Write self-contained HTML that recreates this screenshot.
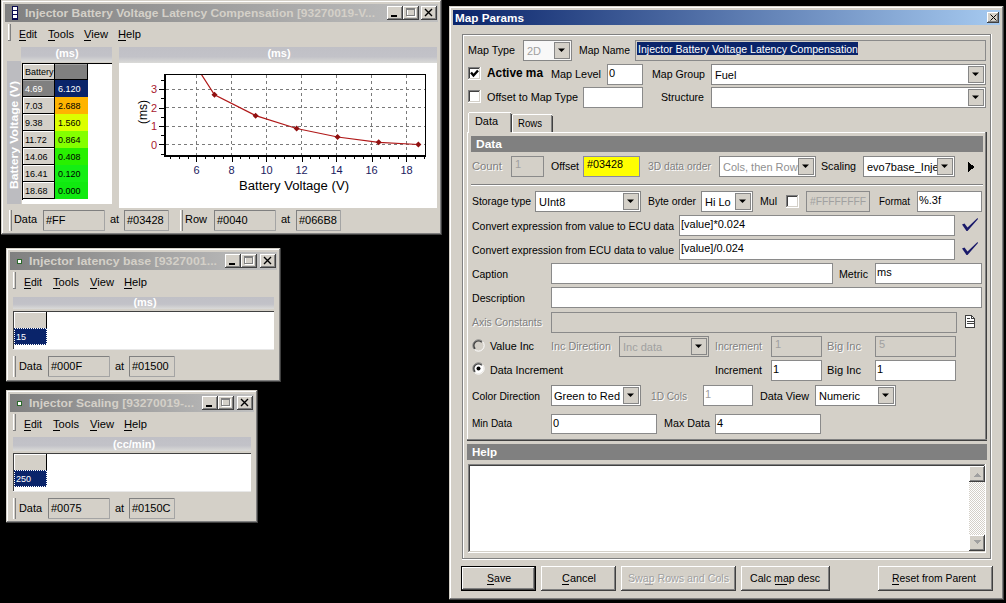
<!DOCTYPE html><html><head><meta charset="utf-8"><style>html,body{margin:0;padding:0;background:#000;overflow:hidden}svg{display:block}text{font-family:"Liberation Sans",sans-serif}</style></head><body>
<svg width="1006" height="603" viewBox="0 0 1006 603" shape-rendering="crispEdges">
<rect x="0" y="0" width="1006" height="603" fill="#000" />
<rect x="1" y="0" width="441" height="235" fill="#d4d0c8" />
<rect x="1" y="0" width="441" height="1" fill="#d4d0c8" />
<rect x="1" y="0" width="1" height="235" fill="#d4d0c8" />
<rect x="2" y="1" width="439" height="1" fill="#ffffff" />
<rect x="2" y="1" width="1" height="233" fill="#ffffff" />
<rect x="1" y="234" width="441" height="1" fill="#404040" />
<rect x="441" y="0" width="1" height="235" fill="#404040" />
<rect x="2" y="233" width="439" height="1" fill="#808080" />
<rect x="440" y="1" width="1" height="233" fill="#808080" />
<defs><linearGradient id="g1_0" x1="0" x2="1" y1="0" y2="0"><stop offset="0" stop-color="#808080"/><stop offset="1" stop-color="#c0c0c0"/></linearGradient></defs>
<rect x="5" y="4" width="433" height="18" fill="url(#g1_0)" />
<rect x="12" y="6" width="6" height="14" fill="#0a0a50" />
<rect x="13" y="7" width="4" height="3" fill="#ffffff" />
<rect x="13" y="11" width="4" height="3" fill="#ffffff" />
<rect x="13" y="15" width="4" height="3" fill="#ffffff" />
<text x="25" y="17" font-size="11" fill="#d4d0c8" font-weight="bold" textLength="350" lengthAdjust="spacingAndGlyphs" >Injector Battery Voltage Latency Compensation [93270019-V...</text>
<rect x="387" y="6" width="16" height="14" fill="#d4d0c8" />
<rect x="387" y="19" width="16" height="1" fill="#404040" />
<rect x="402" y="6" width="1" height="14" fill="#404040" />
<rect x="387" y="6" width="15" height="1" fill="#ffffff" />
<rect x="387" y="6" width="1" height="13" fill="#ffffff" />
<rect x="388" y="18" width="14" height="1" fill="#808080" />
<rect x="401" y="7" width="1" height="12" fill="#808080" />
<rect x="391" y="15" width="6" height="2" fill="#000" />
<rect x="403" y="6" width="16" height="14" fill="#d4d0c8" />
<rect x="403" y="19" width="16" height="1" fill="#404040" />
<rect x="418" y="6" width="1" height="14" fill="#404040" />
<rect x="403" y="6" width="15" height="1" fill="#ffffff" />
<rect x="403" y="6" width="1" height="13" fill="#ffffff" />
<rect x="404" y="18" width="14" height="1" fill="#808080" />
<rect x="417" y="7" width="1" height="12" fill="#808080" />
<rect x="407.5" y="9.5" width="8" height="7" fill="none" stroke="#ffffff" stroke-width="1"/>
<rect x="406.5" y="8.5" width="8" height="7" fill="none" stroke="#808080" stroke-width="1"/>
<rect x="406" y="8" width="9" height="2" fill="#808080" />
<rect x="421" y="6" width="16" height="14" fill="#d4d0c8" />
<rect x="421" y="19" width="16" height="1" fill="#404040" />
<rect x="436" y="6" width="1" height="14" fill="#404040" />
<rect x="421" y="6" width="15" height="1" fill="#ffffff" />
<rect x="421" y="6" width="1" height="13" fill="#ffffff" />
<rect x="422" y="18" width="14" height="1" fill="#808080" />
<rect x="435" y="7" width="1" height="12" fill="#808080" />
<path d="M425 9 L432 16 M432 9 L425 16" stroke="#000" stroke-width="1.4" fill="none" shape-rendering="geometricPrecision"/>
<rect x="8" y="24" width="1" height="17" fill="#ffffff" />
<rect x="9" y="24" width="1" height="17" fill="#d4d0c8" />
<rect x="10" y="24" width="1" height="17" fill="#808080" />
<rect x="8" y="40" width="3" height="1" fill="#808080" />
<text x="19" y="38" font-size="11" fill="#000" textLength="18" lengthAdjust="spacingAndGlyphs" >Edit</text>
<rect x="19" y="40" width="7" height="1" fill="#000" />
<text x="48" y="38" font-size="11" fill="#000" textLength="26" lengthAdjust="spacingAndGlyphs" >Tools</text>
<rect x="48" y="40" width="7" height="1" fill="#000" />
<text x="84" y="38" font-size="11" fill="#000" textLength="24" lengthAdjust="spacingAndGlyphs" >View</text>
<rect x="84" y="40" width="7" height="1" fill="#000" />
<text x="118" y="38" font-size="11" fill="#000" textLength="23" lengthAdjust="spacingAndGlyphs" >Help</text>
<rect x="118" y="40" width="8" height="1" fill="#000" />
<defs><linearGradient id="bandg" x1="0" x2="0" y1="0" y2="1"><stop offset="0" stop-color="#c0c0c6"/><stop offset="0.6" stop-color="#c2c2c8"/><stop offset="1" stop-color="#dadad8"/></linearGradient></defs>
<rect x="6" y="46" width="107" height="160" fill="#d4d0c8" />
<rect x="21" y="47" width="91" height="15" fill="url(#bandg)" />
<text x="67" y="57" font-size="11" fill="#ffffff" font-weight="bold" text-anchor="middle" >(ms)</text>
<rect x="7" y="61" width="14" height="143" fill="#bcbcc0" />
<text transform="translate(18,189) rotate(-90)" font-size="10.5" font-weight="bold" fill="#ffffff" textLength="108" lengthAdjust="spacingAndGlyphs">Battery Voltage (V)</text>
<rect x="22" y="63" width="90" height="141" fill="#ffffff" />
<rect x="22" y="63" width="90" height="1" fill="#000" />
<rect x="22" y="63" width="1" height="137" fill="#000" />
<rect x="23" y="64" width="32" height="16" fill="#d4d0c8" />
<rect x="23" y="64" width="32" height="1" fill="#ffffff" />
<rect x="23" y="64" width="1" height="16" fill="#ffffff" />
<rect x="23" y="79" width="32" height="1" fill="#000000" />
<rect x="54" y="64" width="1" height="16" fill="#000000" />
<text x="25" y="75" font-size="9" fill="#000" >Battery</text>
<rect x="55" y="64" width="33" height="16" fill="#808080" />
<rect x="55" y="64" width="33" height="1" fill="#a0a0a0" />
<rect x="87" y="64" width="1" height="16" fill="#000" />
<rect x="55" y="79" width="33" height="1" fill="#000" />
<rect x="23" y="80" width="32" height="17" fill="#808080" />
<rect x="23" y="80" width="32" height="1" fill="#a0a0a0" />
<rect x="54" y="80" width="1" height="17" fill="#000" />
<rect x="23" y="96" width="32" height="1" fill="#000" />
<text x="25" y="92" font-size="9" fill="#ffffff" >4.69</text>
<rect x="55" y="80" width="33" height="17" fill="#0a246a" />
<text x="58" y="92" font-size="9" fill="#fff" >6.120</text>
<rect x="23" y="97" width="32" height="17" fill="#d4d0c8" />
<rect x="23" y="97" width="32" height="1" fill="#ffffff" />
<rect x="23" y="97" width="1" height="17" fill="#ffffff" />
<rect x="23" y="113" width="32" height="1" fill="#000000" />
<rect x="54" y="97" width="1" height="17" fill="#000000" />
<text x="25" y="109" font-size="9" fill="#000" >7.03</text>
<rect x="55" y="97" width="33" height="17" fill="#ffb400" />
<text x="58" y="109" font-size="9" fill="#000" >2.688</text>
<rect x="23" y="114" width="32" height="17" fill="#d4d0c8" />
<rect x="23" y="114" width="32" height="1" fill="#ffffff" />
<rect x="23" y="114" width="1" height="17" fill="#ffffff" />
<rect x="23" y="130" width="32" height="1" fill="#000000" />
<rect x="54" y="114" width="1" height="17" fill="#000000" />
<text x="25" y="126" font-size="9" fill="#000" >9.38</text>
<rect x="55" y="114" width="33" height="17" fill="#dcff00" />
<text x="58" y="126" font-size="9" fill="#000" >1.560</text>
<rect x="23" y="131" width="32" height="17" fill="#d4d0c8" />
<rect x="23" y="131" width="32" height="1" fill="#ffffff" />
<rect x="23" y="131" width="1" height="17" fill="#ffffff" />
<rect x="23" y="147" width="32" height="1" fill="#000000" />
<rect x="54" y="131" width="1" height="17" fill="#000000" />
<text x="25" y="143" font-size="9" fill="#000" >11.72</text>
<rect x="55" y="131" width="33" height="17" fill="#84ff00" />
<text x="58" y="143" font-size="9" fill="#000" >0.864</text>
<rect x="23" y="148" width="32" height="17" fill="#d4d0c8" />
<rect x="23" y="148" width="32" height="1" fill="#ffffff" />
<rect x="23" y="148" width="1" height="17" fill="#ffffff" />
<rect x="23" y="164" width="32" height="1" fill="#000000" />
<rect x="54" y="148" width="1" height="17" fill="#000000" />
<text x="25" y="160" font-size="9" fill="#000" >14.06</text>
<rect x="55" y="148" width="33" height="17" fill="#28f000" />
<text x="58" y="160" font-size="9" fill="#000" >0.408</text>
<rect x="23" y="165" width="32" height="17" fill="#d4d0c8" />
<rect x="23" y="165" width="32" height="1" fill="#ffffff" />
<rect x="23" y="165" width="1" height="17" fill="#ffffff" />
<rect x="23" y="181" width="32" height="1" fill="#000000" />
<rect x="54" y="165" width="1" height="17" fill="#000000" />
<text x="25" y="177" font-size="9" fill="#000" >16.41</text>
<rect x="55" y="165" width="33" height="17" fill="#14ee14" />
<text x="58" y="177" font-size="9" fill="#000" >0.120</text>
<rect x="23" y="182" width="32" height="17" fill="#d4d0c8" />
<rect x="23" y="182" width="32" height="1" fill="#ffffff" />
<rect x="23" y="182" width="1" height="17" fill="#ffffff" />
<rect x="23" y="198" width="32" height="1" fill="#000000" />
<rect x="54" y="182" width="1" height="17" fill="#000000" />
<text x="25" y="194" font-size="9" fill="#000" >18.68</text>
<rect x="55" y="182" width="33" height="17" fill="#10ea10" />
<text x="58" y="194" font-size="9" fill="#000" >0.000</text>
<rect x="119" y="47" width="318" height="16" fill="url(#bandg)" />
<text x="279" y="57" font-size="11" fill="#ffffff" font-weight="bold" text-anchor="middle" >(ms)</text>
<rect x="119" y="63" width="318" height="145" fill="#ffffff" />
<line x1="196.5" y1="75" x2="196.5" y2="155" stroke="#7a7a7a" stroke-width="1" stroke-dasharray="3,3" shape-rendering="crispEdges"/>
<line x1="231.5" y1="75" x2="231.5" y2="155" stroke="#7a7a7a" stroke-width="1" stroke-dasharray="3,3" shape-rendering="crispEdges"/>
<line x1="266.5" y1="75" x2="266.5" y2="155" stroke="#7a7a7a" stroke-width="1" stroke-dasharray="3,3" shape-rendering="crispEdges"/>
<line x1="301.5" y1="75" x2="301.5" y2="155" stroke="#7a7a7a" stroke-width="1" stroke-dasharray="3,3" shape-rendering="crispEdges"/>
<line x1="336.5" y1="75" x2="336.5" y2="155" stroke="#7a7a7a" stroke-width="1" stroke-dasharray="3,3" shape-rendering="crispEdges"/>
<line x1="371.5" y1="75" x2="371.5" y2="155" stroke="#7a7a7a" stroke-width="1" stroke-dasharray="3,3" shape-rendering="crispEdges"/>
<line x1="406.5" y1="75" x2="406.5" y2="155" stroke="#7a7a7a" stroke-width="1" stroke-dasharray="3,3" shape-rendering="crispEdges"/>
<line x1="166" y1="144.5" x2="426" y2="144.5" stroke="#7a7a7a" stroke-width="1" stroke-dasharray="3,3" shape-rendering="crispEdges"/>
<line x1="166" y1="126.0" x2="426" y2="126.0" stroke="#7a7a7a" stroke-width="1" stroke-dasharray="3,3" shape-rendering="crispEdges"/>
<line x1="166" y1="107.5" x2="426" y2="107.5" stroke="#7a7a7a" stroke-width="1" stroke-dasharray="3,3" shape-rendering="crispEdges"/>
<line x1="166" y1="89.0" x2="426" y2="89.0" stroke="#7a7a7a" stroke-width="1" stroke-dasharray="3,3" shape-rendering="crispEdges"/>
<rect x="164" y="74" width="262" height="1" fill="#000" />
<rect x="425" y="74" width="1" height="82" fill="#000" />
<rect x="164" y="74" width="2" height="83" fill="#000" />
<rect x="164" y="155" width="262" height="2" fill="#000" />
<rect x="170" y="157" width="1" height="2" fill="#000" />
<rect x="179" y="157" width="1" height="2" fill="#000" />
<rect x="188" y="157" width="1" height="2" fill="#000" />
<rect x="196" y="157" width="1" height="5" fill="#000" />
<rect x="205" y="157" width="1" height="2" fill="#000" />
<rect x="214" y="157" width="1" height="2" fill="#000" />
<rect x="223" y="157" width="1" height="2" fill="#000" />
<rect x="232" y="157" width="1" height="5" fill="#000" />
<rect x="240" y="157" width="1" height="2" fill="#000" />
<rect x="249" y="157" width="1" height="2" fill="#000" />
<rect x="258" y="157" width="1" height="2" fill="#000" />
<rect x="266" y="157" width="1" height="5" fill="#000" />
<rect x="275" y="157" width="1" height="2" fill="#000" />
<rect x="284" y="157" width="1" height="2" fill="#000" />
<rect x="293" y="157" width="1" height="2" fill="#000" />
<rect x="302" y="157" width="1" height="5" fill="#000" />
<rect x="310" y="157" width="1" height="2" fill="#000" />
<rect x="319" y="157" width="1" height="2" fill="#000" />
<rect x="328" y="157" width="1" height="2" fill="#000" />
<rect x="336" y="157" width="1" height="5" fill="#000" />
<rect x="345" y="157" width="1" height="2" fill="#000" />
<rect x="354" y="157" width="1" height="2" fill="#000" />
<rect x="363" y="157" width="1" height="2" fill="#000" />
<rect x="372" y="157" width="1" height="5" fill="#000" />
<rect x="380" y="157" width="1" height="2" fill="#000" />
<rect x="389" y="157" width="1" height="2" fill="#000" />
<rect x="398" y="157" width="1" height="2" fill="#000" />
<rect x="406" y="157" width="1" height="5" fill="#000" />
<rect x="415" y="157" width="1" height="2" fill="#000" />
<rect x="424" y="157" width="1" height="2" fill="#000" />
<rect x="161" y="154" width="3" height="1" fill="#000" />
<rect x="159" y="144" width="5" height="1" fill="#000" />
<rect x="161" y="135" width="3" height="1" fill="#000" />
<rect x="159" y="126" width="5" height="1" fill="#000" />
<rect x="161" y="117" width="3" height="1" fill="#000" />
<rect x="159" y="108" width="5" height="1" fill="#000" />
<rect x="161" y="98" width="3" height="1" fill="#000" />
<rect x="159" y="89" width="5" height="1" fill="#000" />
<rect x="161" y="80" width="3" height="1" fill="#000" />
<text x="157" y="148.5" font-size="11" fill="#a82030" text-anchor="end" >0</text>
<text x="157" y="130.0" font-size="11" fill="#a82030" text-anchor="end" >1</text>
<text x="157" y="111.5" font-size="11" fill="#a82030" text-anchor="end" >2</text>
<text x="157" y="93.0" font-size="11" fill="#a82030" text-anchor="end" >3</text>
<text x="196.5" y="174" font-size="11" fill="#1a1a60" text-anchor="middle" >6</text>
<text x="231.5" y="174" font-size="11" fill="#1a1a60" text-anchor="middle" >8</text>
<text x="266.5" y="174" font-size="11" fill="#1a1a60" text-anchor="middle" >10</text>
<text x="301.5" y="174" font-size="11" fill="#1a1a60" text-anchor="middle" >12</text>
<text x="336.5" y="174" font-size="11" fill="#1a1a60" text-anchor="middle" >14</text>
<text x="371.5" y="174" font-size="11" fill="#1a1a60" text-anchor="middle" >16</text>
<text x="406.5" y="174" font-size="11" fill="#1a1a60" text-anchor="middle" >18</text>
<text x="294" y="190" font-size="12" fill="#000" textLength="110" lengthAdjust="spacingAndGlyphs" text-anchor="middle" >Battery Voltage (V)</text>
<text transform="translate(147,112) rotate(-90)" font-size="12" fill="#000" text-anchor="middle">(ms)</text>
<defs><clipPath id="plotclip"><rect x="166" y="75" width="259" height="80"/></clipPath></defs>
<path d="M173.6 31.3 L214.5 94.8 L255.7 115.6 L296.6 128.5 L337.6 137.0 L378.7 142.3 L418.4 144.5" stroke="#b01818" stroke-width="1.2" fill="none" clip-path="url(#plotclip)" shape-rendering="geometricPrecision"/>
<path d="M211.525 94.77199999999999 L214.525 91.77199999999999 L217.525 94.77199999999999 L214.525 97.77199999999999 Z" fill="#901010" shape-rendering="geometricPrecision"/>
<path d="M252.65 115.64 L255.65 112.64 L258.65 115.64 L255.65 118.64 Z" fill="#901010" shape-rendering="geometricPrecision"/>
<path d="M293.6 128.516 L296.6 125.51599999999999 L299.6 128.516 L296.6 131.516 Z" fill="#901010" shape-rendering="geometricPrecision"/>
<path d="M334.55 136.952 L337.55 133.952 L340.55 136.952 L337.55 139.952 Z" fill="#901010" shape-rendering="geometricPrecision"/>
<path d="M375.675 142.28 L378.675 139.28 L381.675 142.28 L378.675 145.28 Z" fill="#901010" shape-rendering="geometricPrecision"/>
<path d="M415.4 144.5 L418.4 141.5 L421.4 144.5 L418.4 147.5 Z" fill="#901010" shape-rendering="geometricPrecision"/>
<rect x="9" y="210" width="1" height="21" fill="#ffffff" />
<rect x="10" y="210" width="1" height="21" fill="#d4d0c8" />
<rect x="11" y="210" width="1" height="21" fill="#808080" />
<text x="14" y="223" font-size="11" fill="#000" textLength="23" lengthAdjust="spacingAndGlyphs" >Data</text>
<rect x="43" y="210" width="62" height="21" fill="#d4d0c8" />
<rect x="43" y="210" width="62" height="1" fill="#808080" />
<rect x="43" y="210" width="1" height="21" fill="#808080" />
<rect x="43" y="230" width="62" height="1" fill="#a4a4a4" />
<rect x="104" y="210" width="1" height="21" fill="#a4a4a4" />
<text x="46" y="224" font-size="11" fill="#000" >#FF</text>
<text x="110" y="223" font-size="11" fill="#000" >at</text>
<rect x="124" y="210" width="45" height="21" fill="#d4d0c8" />
<rect x="124" y="210" width="45" height="1" fill="#808080" />
<rect x="124" y="210" width="1" height="21" fill="#808080" />
<rect x="124" y="230" width="45" height="1" fill="#a4a4a4" />
<rect x="168" y="210" width="1" height="21" fill="#a4a4a4" />
<text x="127" y="224" font-size="11" fill="#000" >#03428</text>
<rect x="180" y="210" width="1" height="21" fill="#ffffff" />
<rect x="181" y="210" width="1" height="21" fill="#d4d0c8" />
<rect x="182" y="210" width="1" height="21" fill="#808080" />
<text x="185" y="223" font-size="11" fill="#000" textLength="22" lengthAdjust="spacingAndGlyphs" >Row</text>
<rect x="214" y="210" width="62" height="21" fill="#d4d0c8" />
<rect x="214" y="210" width="62" height="1" fill="#808080" />
<rect x="214" y="210" width="1" height="21" fill="#808080" />
<rect x="214" y="230" width="62" height="1" fill="#a4a4a4" />
<rect x="275" y="210" width="1" height="21" fill="#a4a4a4" />
<text x="217" y="224" font-size="11" fill="#000" >#0040</text>
<text x="281" y="223" font-size="11" fill="#000" >at</text>
<rect x="296" y="210" width="45" height="21" fill="#d4d0c8" />
<rect x="296" y="210" width="45" height="1" fill="#808080" />
<rect x="296" y="210" width="1" height="21" fill="#808080" />
<rect x="296" y="230" width="45" height="1" fill="#a4a4a4" />
<rect x="340" y="210" width="1" height="21" fill="#a4a4a4" />
<text x="299" y="224" font-size="11" fill="#000" >#066B8</text>
<rect x="6" y="248" width="275" height="134" fill="#d4d0c8" />
<rect x="6" y="248" width="275" height="1" fill="#d4d0c8" />
<rect x="6" y="248" width="1" height="134" fill="#d4d0c8" />
<rect x="7" y="249" width="273" height="1" fill="#ffffff" />
<rect x="7" y="249" width="1" height="132" fill="#ffffff" />
<rect x="6" y="381" width="275" height="1" fill="#404040" />
<rect x="280" y="248" width="1" height="134" fill="#404040" />
<rect x="7" y="380" width="273" height="1" fill="#808080" />
<rect x="279" y="249" width="1" height="132" fill="#808080" />
<defs><linearGradient id="gs6_248" x1="0" x2="1" y1="0" y2="0"><stop offset="0" stop-color="#808080"/><stop offset="1" stop-color="#c0c0c0"/></linearGradient></defs>
<rect x="10" y="252" width="267" height="18" fill="url(#gs6_248)" />
<rect x="17" y="259" width="5" height="5" fill="#2a6a2a" />
<rect x="18" y="260" width="3" height="3" fill="#ffffff" />
<text x="29" y="265" font-size="11" fill="#d4d0c8" font-weight="bold" textLength="188" lengthAdjust="spacingAndGlyphs" >Injector latency base [9327001...</text>
<rect x="225" y="254" width="16" height="14" fill="#d4d0c8" />
<rect x="225" y="267" width="16" height="1" fill="#404040" />
<rect x="240" y="254" width="1" height="14" fill="#404040" />
<rect x="225" y="254" width="15" height="1" fill="#ffffff" />
<rect x="225" y="254" width="1" height="13" fill="#ffffff" />
<rect x="226" y="266" width="14" height="1" fill="#808080" />
<rect x="239" y="255" width="1" height="12" fill="#808080" />
<rect x="229" y="263" width="6" height="2" fill="#000" />
<rect x="241" y="254" width="16" height="14" fill="#d4d0c8" />
<rect x="241" y="267" width="16" height="1" fill="#404040" />
<rect x="256" y="254" width="1" height="14" fill="#404040" />
<rect x="241" y="254" width="15" height="1" fill="#ffffff" />
<rect x="241" y="254" width="1" height="13" fill="#ffffff" />
<rect x="242" y="266" width="14" height="1" fill="#808080" />
<rect x="255" y="255" width="1" height="12" fill="#808080" />
<rect x="245.5" y="257.5" width="8" height="7" fill="none" stroke="#ffffff" stroke-width="1"/>
<rect x="244.5" y="256.5" width="8" height="7" fill="none" stroke="#808080" stroke-width="1"/>
<rect x="244" y="256" width="9" height="2" fill="#808080" />
<rect x="260" y="254" width="16" height="14" fill="#d4d0c8" />
<rect x="260" y="267" width="16" height="1" fill="#404040" />
<rect x="275" y="254" width="1" height="14" fill="#404040" />
<rect x="260" y="254" width="15" height="1" fill="#ffffff" />
<rect x="260" y="254" width="1" height="13" fill="#ffffff" />
<rect x="261" y="266" width="14" height="1" fill="#808080" />
<rect x="274" y="255" width="1" height="12" fill="#808080" />
<path d="M264 257 L271 264 M271 257 L264 264" stroke="#000" stroke-width="1.4" fill="none" shape-rendering="geometricPrecision"/>
<rect x="13" y="272" width="1" height="17" fill="#ffffff" />
<rect x="14" y="272" width="1" height="17" fill="#d4d0c8" />
<rect x="15" y="272" width="1" height="17" fill="#808080" />
<rect x="13" y="288" width="3" height="1" fill="#808080" />
<text x="24" y="286" font-size="11" fill="#000" textLength="18" lengthAdjust="spacingAndGlyphs" >Edit</text>
<rect x="24" y="288" width="7" height="1" fill="#000" />
<text x="53" y="286" font-size="11" fill="#000" textLength="26" lengthAdjust="spacingAndGlyphs" >Tools</text>
<rect x="53" y="288" width="7" height="1" fill="#000" />
<text x="90" y="286" font-size="11" fill="#000" textLength="24" lengthAdjust="spacingAndGlyphs" >View</text>
<rect x="90" y="288" width="7" height="1" fill="#000" />
<text x="124" y="286" font-size="11" fill="#000" textLength="23" lengthAdjust="spacingAndGlyphs" >Help</text>
<rect x="124" y="288" width="8" height="1" fill="#000" />
<rect x="13" y="297" width="261" height="12" fill="url(#bandg)" />
<text x="145" y="306" font-size="11" fill="#ffffff" font-weight="bold" text-anchor="middle" >(ms)</text>
<rect x="13" y="311" width="261" height="39" fill="#ffffff" />
<rect x="13" y="311" width="261" height="1" fill="#404040" />
<rect x="13" y="311" width="1" height="39" fill="#404040" />
<rect x="13" y="349" width="261" height="1" fill="#e8e8e8" />
<rect x="14" y="312" width="32" height="17" fill="#d4d0c8" />
<rect x="14" y="312" width="32" height="1" fill="#ffffff" />
<rect x="14" y="312" width="1" height="17" fill="#ffffff" />
<rect x="14" y="328" width="33" height="1" fill="#000" />
<rect x="46" y="312" width="1" height="17" fill="#000" />
<rect x="14" y="328" width="33" height="17" fill="#0a246a" />
<rect x="14.5" y="328.5" width="32" height="16" fill="none" stroke="#ffffff" stroke-width="1" stroke-dasharray="1,1"/>
<text x="16" y="340" font-size="9" fill="#ffffff" >15</text>
<rect x="13" y="356" width="1" height="21" fill="#ffffff" />
<rect x="14" y="356" width="1" height="21" fill="#d4d0c8" />
<rect x="15" y="356" width="1" height="21" fill="#808080" />
<text x="19" y="370" font-size="11" fill="#000" textLength="23" lengthAdjust="spacingAndGlyphs" >Data</text>
<rect x="48" y="356" width="62" height="21" fill="#d4d0c8" />
<rect x="48" y="356" width="62" height="1" fill="#808080" />
<rect x="48" y="356" width="1" height="21" fill="#808080" />
<rect x="48" y="376" width="62" height="1" fill="#a4a4a4" />
<rect x="109" y="356" width="1" height="21" fill="#a4a4a4" />
<text x="51" y="370" font-size="11" fill="#000" >#000F</text>
<text x="115" y="370" font-size="11" fill="#000" >at</text>
<rect x="129" y="356" width="46" height="21" fill="#d4d0c8" />
<rect x="129" y="356" width="46" height="1" fill="#808080" />
<rect x="129" y="356" width="1" height="21" fill="#808080" />
<rect x="129" y="376" width="46" height="1" fill="#a4a4a4" />
<rect x="174" y="356" width="1" height="21" fill="#a4a4a4" />
<text x="132" y="370" font-size="11" fill="#000" >#01500</text>
<rect x="6" y="390" width="252" height="133" fill="#d4d0c8" />
<rect x="6" y="390" width="252" height="1" fill="#d4d0c8" />
<rect x="6" y="390" width="1" height="133" fill="#d4d0c8" />
<rect x="7" y="391" width="250" height="1" fill="#ffffff" />
<rect x="7" y="391" width="1" height="131" fill="#ffffff" />
<rect x="6" y="522" width="252" height="1" fill="#404040" />
<rect x="257" y="390" width="1" height="133" fill="#404040" />
<rect x="7" y="521" width="250" height="1" fill="#808080" />
<rect x="256" y="391" width="1" height="131" fill="#808080" />
<defs><linearGradient id="gs6_390" x1="0" x2="1" y1="0" y2="0"><stop offset="0" stop-color="#808080"/><stop offset="1" stop-color="#c0c0c0"/></linearGradient></defs>
<rect x="10" y="394" width="244" height="18" fill="url(#gs6_390)" />
<rect x="17" y="401" width="5" height="5" fill="#2a6a2a" />
<rect x="18" y="402" width="3" height="3" fill="#ffffff" />
<text x="29" y="407" font-size="11" fill="#d4d0c8" font-weight="bold" textLength="165" lengthAdjust="spacingAndGlyphs" >Injector Scaling [93270019-...</text>
<rect x="202" y="396" width="16" height="14" fill="#d4d0c8" />
<rect x="202" y="409" width="16" height="1" fill="#404040" />
<rect x="217" y="396" width="1" height="14" fill="#404040" />
<rect x="202" y="396" width="15" height="1" fill="#ffffff" />
<rect x="202" y="396" width="1" height="13" fill="#ffffff" />
<rect x="203" y="408" width="14" height="1" fill="#808080" />
<rect x="216" y="397" width="1" height="12" fill="#808080" />
<rect x="206" y="405" width="6" height="2" fill="#000" />
<rect x="218" y="396" width="16" height="14" fill="#d4d0c8" />
<rect x="218" y="409" width="16" height="1" fill="#404040" />
<rect x="233" y="396" width="1" height="14" fill="#404040" />
<rect x="218" y="396" width="15" height="1" fill="#ffffff" />
<rect x="218" y="396" width="1" height="13" fill="#ffffff" />
<rect x="219" y="408" width="14" height="1" fill="#808080" />
<rect x="232" y="397" width="1" height="12" fill="#808080" />
<rect x="222.5" y="399.5" width="8" height="7" fill="none" stroke="#ffffff" stroke-width="1"/>
<rect x="221.5" y="398.5" width="8" height="7" fill="none" stroke="#808080" stroke-width="1"/>
<rect x="221" y="398" width="9" height="2" fill="#808080" />
<rect x="237" y="396" width="16" height="14" fill="#d4d0c8" />
<rect x="237" y="409" width="16" height="1" fill="#404040" />
<rect x="252" y="396" width="1" height="14" fill="#404040" />
<rect x="237" y="396" width="15" height="1" fill="#ffffff" />
<rect x="237" y="396" width="1" height="13" fill="#ffffff" />
<rect x="238" y="408" width="14" height="1" fill="#808080" />
<rect x="251" y="397" width="1" height="12" fill="#808080" />
<path d="M241 399 L248 406 M248 399 L241 406" stroke="#000" stroke-width="1.4" fill="none" shape-rendering="geometricPrecision"/>
<rect x="13" y="414" width="1" height="17" fill="#ffffff" />
<rect x="14" y="414" width="1" height="17" fill="#d4d0c8" />
<rect x="15" y="414" width="1" height="17" fill="#808080" />
<rect x="13" y="430" width="3" height="1" fill="#808080" />
<text x="24" y="428" font-size="11" fill="#000" textLength="18" lengthAdjust="spacingAndGlyphs" >Edit</text>
<rect x="24" y="430" width="7" height="1" fill="#000" />
<text x="53" y="428" font-size="11" fill="#000" textLength="26" lengthAdjust="spacingAndGlyphs" >Tools</text>
<rect x="53" y="430" width="7" height="1" fill="#000" />
<text x="90" y="428" font-size="11" fill="#000" textLength="24" lengthAdjust="spacingAndGlyphs" >View</text>
<rect x="90" y="430" width="7" height="1" fill="#000" />
<text x="124" y="428" font-size="11" fill="#000" textLength="23" lengthAdjust="spacingAndGlyphs" >Help</text>
<rect x="124" y="430" width="8" height="1" fill="#000" />
<rect x="13" y="437" width="238" height="14" fill="url(#bandg)" />
<text x="134" y="448" font-size="11" fill="#ffffff" font-weight="bold" text-anchor="middle" >(cc/min)</text>
<rect x="13" y="453" width="238" height="39" fill="#ffffff" />
<rect x="13" y="453" width="238" height="1" fill="#404040" />
<rect x="13" y="453" width="1" height="39" fill="#404040" />
<rect x="13" y="491" width="238" height="1" fill="#e8e8e8" />
<rect x="14" y="454" width="32" height="17" fill="#d4d0c8" />
<rect x="14" y="454" width="32" height="1" fill="#ffffff" />
<rect x="14" y="454" width="1" height="17" fill="#ffffff" />
<rect x="14" y="470" width="33" height="1" fill="#000" />
<rect x="46" y="454" width="1" height="17" fill="#000" />
<rect x="14" y="470" width="33" height="17" fill="#0a246a" />
<rect x="14.5" y="470.5" width="32" height="16" fill="none" stroke="#ffffff" stroke-width="1" stroke-dasharray="1,1"/>
<text x="16" y="482" font-size="9" fill="#ffffff" >250</text>
<rect x="13" y="498" width="1" height="21" fill="#ffffff" />
<rect x="14" y="498" width="1" height="21" fill="#d4d0c8" />
<rect x="15" y="498" width="1" height="21" fill="#808080" />
<text x="19" y="512" font-size="11" fill="#000" textLength="23" lengthAdjust="spacingAndGlyphs" >Data</text>
<rect x="48" y="498" width="62" height="21" fill="#d4d0c8" />
<rect x="48" y="498" width="62" height="1" fill="#808080" />
<rect x="48" y="498" width="1" height="21" fill="#808080" />
<rect x="48" y="518" width="62" height="1" fill="#a4a4a4" />
<rect x="109" y="498" width="1" height="21" fill="#a4a4a4" />
<text x="51" y="512" font-size="11" fill="#000" >#0075</text>
<text x="115" y="512" font-size="11" fill="#000" >at</text>
<rect x="129" y="498" width="46" height="21" fill="#d4d0c8" />
<rect x="129" y="498" width="46" height="1" fill="#808080" />
<rect x="129" y="498" width="1" height="21" fill="#808080" />
<rect x="129" y="518" width="46" height="1" fill="#a4a4a4" />
<rect x="174" y="498" width="1" height="21" fill="#a4a4a4" />
<text x="132" y="512" font-size="11" fill="#000" >#0150C</text>
<rect x="449" y="6" width="555" height="594" fill="#d4d0c8" />
<rect x="449" y="6" width="555" height="1" fill="#d4d0c8" />
<rect x="449" y="6" width="1" height="594" fill="#d4d0c8" />
<rect x="450" y="7" width="553" height="1" fill="#ffffff" />
<rect x="450" y="7" width="1" height="592" fill="#ffffff" />
<rect x="449" y="599" width="555" height="1" fill="#404040" />
<rect x="1003" y="6" width="1" height="594" fill="#404040" />
<rect x="450" y="598" width="553" height="1" fill="#808080" />
<rect x="1002" y="7" width="1" height="592" fill="#808080" />
<defs><linearGradient id="gdlg" x1="0" x2="1" y1="0" y2="0"><stop offset="0" stop-color="#0a246a"/><stop offset="1" stop-color="#a6caf0"/></linearGradient></defs>
<rect x="453" y="10" width="547" height="15" fill="url(#gdlg)" />
<text x="455" y="21.5" font-size="11" fill="#ffffff" font-weight="bold" textLength="69" lengthAdjust="spacingAndGlyphs" >Map Params</text>
<rect x="987" y="12" width="12" height="11" fill="#d4d0c8" />
<rect x="987" y="22" width="12" height="1" fill="#404040" />
<rect x="998" y="12" width="1" height="11" fill="#404040" />
<rect x="987" y="12" width="11" height="1" fill="#ffffff" />
<rect x="987" y="12" width="1" height="10" fill="#ffffff" />
<rect x="988" y="21" width="10" height="1" fill="#808080" />
<rect x="997" y="13" width="1" height="9" fill="#808080" />
<path d="M990.5 14.5 L996.5 20.5 M996.5 14.5 L990.5 20.5" stroke="#000" stroke-width="1" fill="none" shape-rendering="geometricPrecision"/>
<rect x="462" y="34" width="530" height="1" fill="#808080" />
<rect x="462" y="34" width="1" height="526" fill="#808080" />
<rect x="463" y="35" width="528" height="1" fill="#ffffff" />
<rect x="463" y="35" width="1" height="524" fill="#ffffff" />
<rect x="462" y="558" width="530" height="1" fill="#808080" />
<rect x="990" y="34" width="1" height="525" fill="#808080" />
<rect x="462" y="559" width="530" height="1" fill="#ffffff" />
<rect x="991" y="34" width="1" height="526" fill="#ffffff" />
<text x="468" y="54" font-size="11" fill="#000" textLength="47" lengthAdjust="spacingAndGlyphs" >Map Type</text>
<rect x="523" y="40" width="49" height="21" fill="#f8f8f8" />
<rect x="523" y="40" width="49" height="1" fill="#868686" />
<rect x="523" y="40" width="1" height="21" fill="#868686" />
<rect x="523" y="60" width="49" height="1" fill="#868686" />
<rect x="571" y="40" width="1" height="21" fill="#868686" />
<clipPath id="cc523_40"><rect x="524" y="41" width="30" height="19"/></clipPath>
<text x="527" y="55" font-size="11" fill="#a0a0a0" clip-path="url(#cc523_40)">2D</text>
<rect x="554" y="42" width="16" height="17" fill="#d4d0c8" />
<rect x="554" y="42" width="16" height="1" fill="#868686" />
<rect x="554" y="58" width="16" height="1" fill="#868686" />
<rect x="554" y="42" width="1" height="17" fill="#868686" />
<rect x="569" y="42" width="1" height="17" fill="#868686" />
<path d="M558.0 48.5 L565.0 48.5 L561.5 52.0 Z" fill="#000" shape-rendering="geometricPrecision"/>
<text x="579" y="54" font-size="11" fill="#000" textLength="51" lengthAdjust="spacingAndGlyphs" >Map Name</text>
<rect x="635" y="40" width="351" height="21" fill="#d4d0c8" />
<rect x="635" y="40" width="351" height="1" fill="#8a8a8a" />
<rect x="635" y="40" width="1" height="21" fill="#8a8a8a" />
<rect x="635" y="60" width="351" height="1" fill="#8a8a8a" />
<rect x="985" y="40" width="1" height="21" fill="#8a8a8a" />
<rect x="637" y="42" width="221" height="13" fill="#0a246a" />
<text x="638" y="53" font-size="11" fill="#ffffff" textLength="220" lengthAdjust="spacingAndGlyphs" >Injector Battery Voltage Latency Compensation</text>
<rect x="468" y="67" width="13" height="13" fill="#ffffff" />
<rect x="468" y="67" width="13" height="1" fill="#808080" />
<rect x="468" y="67" width="1" height="13" fill="#808080" />
<rect x="469" y="68" width="11" height="1" fill="#404040" />
<rect x="469" y="68" width="1" height="11" fill="#404040" />
<rect x="468" y="79" width="13" height="1" fill="#ffffff" />
<rect x="480" y="67" width="1" height="13" fill="#ffffff" />
<rect x="469" y="78" width="11" height="1" fill="#d4d0c8" />
<rect x="479" y="68" width="1" height="11" fill="#d4d0c8" />
<path d="M471 72.5 L473.5 75.5 L478 70.5" stroke="#000" stroke-width="2.4" fill="none" shape-rendering="geometricPrecision"/>
<text x="487" y="77" font-size="12" fill="#000" font-weight="bold" textLength="56" lengthAdjust="spacingAndGlyphs" >Active ma</text>
<text x="551" y="78" font-size="11" fill="#000" textLength="50" lengthAdjust="spacingAndGlyphs" >Map Level</text>
<rect x="607" y="64" width="36" height="21" fill="#ffffff" />
<rect x="607" y="64" width="36" height="1" fill="#8a8a8a" />
<rect x="607" y="64" width="1" height="21" fill="#8a8a8a" />
<rect x="607" y="84" width="36" height="1" fill="#8a8a8a" />
<rect x="642" y="64" width="1" height="21" fill="#8a8a8a" />
<text x="609" y="77" font-size="11" fill="#000" >0</text>
<text x="652" y="78" font-size="11" fill="#000" textLength="53" lengthAdjust="spacingAndGlyphs" >Map Group</text>
<rect x="711" y="64" width="275" height="21" fill="#ffffff" />
<rect x="711" y="64" width="275" height="1" fill="#868686" />
<rect x="711" y="64" width="1" height="21" fill="#868686" />
<rect x="711" y="84" width="275" height="1" fill="#868686" />
<rect x="985" y="64" width="1" height="21" fill="#868686" />
<clipPath id="cc711_64"><rect x="712" y="65" width="256" height="19"/></clipPath>
<text x="715" y="79" font-size="11" fill="#000" clip-path="url(#cc711_64)">Fuel</text>
<rect x="968" y="66" width="16" height="17" fill="#d4d0c8" />
<rect x="968" y="66" width="16" height="1" fill="#868686" />
<rect x="968" y="82" width="16" height="1" fill="#868686" />
<rect x="968" y="66" width="1" height="17" fill="#868686" />
<rect x="983" y="66" width="1" height="17" fill="#868686" />
<path d="M972.0 72.5 L979.0 72.5 L975.5 76.0 Z" fill="#000" shape-rendering="geometricPrecision"/>
<rect x="468" y="90" width="13" height="13" fill="#ffffff" />
<rect x="468" y="90" width="13" height="1" fill="#808080" />
<rect x="468" y="90" width="1" height="13" fill="#808080" />
<rect x="469" y="91" width="11" height="1" fill="#404040" />
<rect x="469" y="91" width="1" height="11" fill="#404040" />
<rect x="468" y="102" width="13" height="1" fill="#ffffff" />
<rect x="480" y="90" width="1" height="13" fill="#ffffff" />
<rect x="469" y="101" width="11" height="1" fill="#d4d0c8" />
<rect x="479" y="91" width="1" height="11" fill="#d4d0c8" />
<text x="487" y="101" font-size="11" fill="#000" textLength="91" lengthAdjust="spacingAndGlyphs" >Offset to Map Type</text>
<rect x="583" y="87" width="60" height="21" fill="#ffffff" />
<rect x="583" y="87" width="60" height="1" fill="#8a8a8a" />
<rect x="583" y="87" width="1" height="21" fill="#8a8a8a" />
<rect x="583" y="107" width="60" height="1" fill="#8a8a8a" />
<rect x="642" y="87" width="1" height="21" fill="#8a8a8a" />
<text x="661" y="101" font-size="11" fill="#000" textLength="43" lengthAdjust="spacingAndGlyphs" >Structure</text>
<rect x="711" y="87" width="275" height="21" fill="#ffffff" />
<rect x="711" y="87" width="275" height="1" fill="#868686" />
<rect x="711" y="87" width="1" height="21" fill="#868686" />
<rect x="711" y="107" width="275" height="1" fill="#868686" />
<rect x="985" y="87" width="1" height="21" fill="#868686" />
<rect x="968" y="89" width="16" height="17" fill="#d4d0c8" />
<rect x="968" y="89" width="16" height="1" fill="#868686" />
<rect x="968" y="105" width="16" height="1" fill="#868686" />
<rect x="968" y="89" width="1" height="17" fill="#868686" />
<rect x="983" y="89" width="1" height="17" fill="#868686" />
<path d="M972.0 95.5 L979.0 95.5 L975.5 99.0 Z" fill="#000" shape-rendering="geometricPrecision"/>
<rect x="467" y="132" width="520" height="309" fill="#d4d0c8" />
<rect x="467" y="132" width="519" height="1" fill="#ffffff" />
<rect x="467" y="132" width="1" height="309" fill="#ffffff" />
<rect x="985" y="132" width="1" height="309" fill="#808080" />
<rect x="986" y="132" width="1" height="309" fill="#404040" />
<rect x="467" y="439" width="520" height="1" fill="#808080" />
<rect x="467" y="440" width="520" height="1" fill="#404040" />
<rect x="512" y="114" width="41" height="18" fill="#d4d0c8" />
<rect x="513" y="114" width="39" height="1" fill="#ffffff" />
<rect x="512" y="115" width="1" height="17" fill="#ffffff" />
<rect x="551" y="115" width="1" height="17" fill="#808080" />
<rect x="552" y="116" width="1" height="16" fill="#404040" />
<text x="518" y="127" font-size="11" fill="#000" textLength="24" lengthAdjust="spacingAndGlyphs" >Rows</text>
<rect x="468" y="112" width="44" height="21" fill="#d4d0c8" />
<rect x="469" y="112" width="42" height="1" fill="#ffffff" />
<rect x="468" y="113" width="1" height="20" fill="#ffffff" />
<rect x="510" y="113" width="1" height="19" fill="#808080" />
<rect x="511" y="114" width="1" height="18" fill="#404040" />
<text x="475" y="125" font-size="11" fill="#000" textLength="23" lengthAdjust="spacingAndGlyphs" >Data</text>
<rect x="471" y="136" width="512" height="16" fill="#808080" />
<text x="476" y="147.5" font-size="11" fill="#ffffff" font-weight="bold" textLength="26" lengthAdjust="spacingAndGlyphs" >Data</text>
<text x="473" y="171" font-size="11" fill="#ffffff" textLength="30" lengthAdjust="spacingAndGlyphs" >Count</text>
<text x="472" y="170" font-size="11" fill="#808080" textLength="30" lengthAdjust="spacingAndGlyphs" >Count</text>
<rect x="511" y="156" width="33" height="21" fill="#d4d0c8" />
<rect x="511" y="156" width="33" height="1" fill="#8a8a8a" />
<rect x="511" y="156" width="1" height="21" fill="#8a8a8a" />
<rect x="511" y="176" width="33" height="1" fill="#8a8a8a" />
<rect x="543" y="156" width="1" height="21" fill="#8a8a8a" />
<text x="515" y="168" font-size="11" fill="#a0a0a0" >1</text>
<text x="551" y="170" font-size="11" fill="#000" textLength="28" lengthAdjust="spacingAndGlyphs" >Offset</text>
<rect x="583" y="156" width="57" height="21" fill="#ffff00" />
<rect x="583" y="156" width="57" height="1" fill="#8a8aa0" />
<rect x="583" y="156" width="1" height="21" fill="#8a8aa0" />
<rect x="583" y="176" width="57" height="1" fill="#8a8aa0" />
<rect x="639" y="156" width="1" height="21" fill="#8a8aa0" />
<text x="587" y="168" font-size="11" fill="#000" textLength="36" lengthAdjust="spacingAndGlyphs" >#03428</text>
<text x="649" y="171" font-size="11" fill="#ffffff" textLength="63" lengthAdjust="spacingAndGlyphs" >3D data order</text>
<text x="648" y="170" font-size="11" fill="#808080" textLength="63" lengthAdjust="spacingAndGlyphs" >3D data order</text>
<rect x="719" y="156" width="97" height="21" fill="#ffffff" />
<rect x="719" y="156" width="97" height="1" fill="#868686" />
<rect x="719" y="156" width="1" height="21" fill="#868686" />
<rect x="719" y="176" width="97" height="1" fill="#868686" />
<rect x="815" y="156" width="1" height="21" fill="#868686" />
<clipPath id="cc719_156"><rect x="720" y="157" width="78" height="19"/></clipPath>
<text x="723" y="171" font-size="11" fill="#909090" clip-path="url(#cc719_156)">Cols, then Rows</text>
<rect x="798" y="158" width="16" height="17" fill="#d4d0c8" />
<rect x="798" y="158" width="16" height="1" fill="#868686" />
<rect x="798" y="174" width="16" height="1" fill="#868686" />
<rect x="798" y="158" width="1" height="17" fill="#868686" />
<rect x="813" y="158" width="1" height="17" fill="#868686" />
<path d="M802.0 164.5 L809.0 164.5 L805.5 168.0 Z" fill="#000" shape-rendering="geometricPrecision"/>
<text x="821" y="170" font-size="11" fill="#000" textLength="35" lengthAdjust="spacingAndGlyphs" >Scaling</text>
<rect x="863" y="156" width="92" height="21" fill="#ffffff" />
<rect x="863" y="156" width="92" height="1" fill="#868686" />
<rect x="863" y="156" width="1" height="21" fill="#868686" />
<rect x="863" y="176" width="92" height="1" fill="#868686" />
<rect x="954" y="156" width="1" height="21" fill="#868686" />
<clipPath id="cc863_156"><rect x="864" y="157" width="73" height="19"/></clipPath>
<text x="867" y="171" font-size="11" fill="#000" clip-path="url(#cc863_156)">evo7base_Injector</text>
<rect x="937" y="158" width="16" height="17" fill="#d4d0c8" />
<rect x="937" y="158" width="16" height="1" fill="#868686" />
<rect x="937" y="174" width="16" height="1" fill="#868686" />
<rect x="937" y="158" width="1" height="17" fill="#868686" />
<rect x="952" y="158" width="1" height="17" fill="#868686" />
<path d="M941.0 164.5 L948.0 164.5 L944.5 168.0 Z" fill="#000" shape-rendering="geometricPrecision"/>
<path d="M968 162 L975 167 L968 172 Z" fill="#000"/>
<rect x="471" y="184" width="512" height="1" fill="#808080" />
<rect x="471" y="185" width="512" height="1" fill="#ffffff" />
<text x="472" y="205" font-size="11" fill="#000" textLength="59" lengthAdjust="spacingAndGlyphs" >Storage type</text>
<rect x="535" y="191" width="106" height="21" fill="#ffffff" />
<rect x="535" y="191" width="106" height="1" fill="#868686" />
<rect x="535" y="191" width="1" height="21" fill="#868686" />
<rect x="535" y="211" width="106" height="1" fill="#868686" />
<rect x="640" y="191" width="1" height="21" fill="#868686" />
<clipPath id="cc535_191"><rect x="536" y="192" width="87" height="19"/></clipPath>
<text x="539" y="206" font-size="11" fill="#000" clip-path="url(#cc535_191)">UInt8</text>
<rect x="623" y="193" width="16" height="17" fill="#d4d0c8" />
<rect x="623" y="193" width="16" height="1" fill="#868686" />
<rect x="623" y="209" width="16" height="1" fill="#868686" />
<rect x="623" y="193" width="1" height="17" fill="#868686" />
<rect x="638" y="193" width="1" height="17" fill="#868686" />
<path d="M627.0 199.5 L634.0 199.5 L630.5 203.0 Z" fill="#000" shape-rendering="geometricPrecision"/>
<text x="648" y="205" font-size="11" fill="#000" textLength="48" lengthAdjust="spacingAndGlyphs" >Byte order</text>
<rect x="701" y="191" width="52" height="21" fill="#ffffff" />
<rect x="701" y="191" width="52" height="1" fill="#868686" />
<rect x="701" y="191" width="1" height="21" fill="#868686" />
<rect x="701" y="211" width="52" height="1" fill="#868686" />
<rect x="752" y="191" width="1" height="21" fill="#868686" />
<clipPath id="cc701_191"><rect x="702" y="192" width="33" height="19"/></clipPath>
<text x="705" y="206" font-size="11" fill="#000" clip-path="url(#cc701_191)">Hi Lo</text>
<rect x="735" y="193" width="16" height="17" fill="#d4d0c8" />
<rect x="735" y="193" width="16" height="1" fill="#868686" />
<rect x="735" y="209" width="16" height="1" fill="#868686" />
<rect x="735" y="193" width="1" height="17" fill="#868686" />
<rect x="750" y="193" width="1" height="17" fill="#868686" />
<path d="M739.0 199.5 L746.0 199.5 L742.5 203.0 Z" fill="#000" shape-rendering="geometricPrecision"/>
<text x="760" y="205" font-size="11" fill="#000" textLength="17" lengthAdjust="spacingAndGlyphs" >Mul</text>
<rect x="786" y="195" width="13" height="13" fill="#ffffff" />
<rect x="786" y="195" width="13" height="1" fill="#808080" />
<rect x="786" y="195" width="1" height="13" fill="#808080" />
<rect x="787" y="196" width="11" height="1" fill="#404040" />
<rect x="787" y="196" width="1" height="11" fill="#404040" />
<rect x="786" y="207" width="13" height="1" fill="#ffffff" />
<rect x="798" y="195" width="1" height="13" fill="#ffffff" />
<rect x="787" y="206" width="11" height="1" fill="#d4d0c8" />
<rect x="797" y="196" width="1" height="11" fill="#d4d0c8" />
<rect x="806" y="191" width="64" height="21" fill="#d4d0c8" />
<rect x="806" y="191" width="64" height="1" fill="#8a8a8a" />
<rect x="806" y="191" width="1" height="21" fill="#8a8a8a" />
<rect x="806" y="211" width="64" height="1" fill="#8a8a8a" />
<rect x="869" y="191" width="1" height="21" fill="#8a8a8a" />
<text x="810" y="205" font-size="11" fill="#a0a0a0" textLength="56" lengthAdjust="spacingAndGlyphs" >#FFFFFFFF</text>
<text x="879" y="205" font-size="11" fill="#000" textLength="31" lengthAdjust="spacingAndGlyphs" >Format</text>
<rect x="917" y="191" width="65" height="21" fill="#ffffff" />
<rect x="917" y="191" width="65" height="1" fill="#8a8a8a" />
<rect x="917" y="191" width="1" height="21" fill="#8a8a8a" />
<rect x="917" y="211" width="65" height="1" fill="#8a8a8a" />
<rect x="981" y="191" width="1" height="21" fill="#8a8a8a" />
<text x="919" y="204" font-size="11" fill="#000" >%.3f</text>
<text x="472" y="230" font-size="11" fill="#000" textLength="202" lengthAdjust="spacingAndGlyphs" >Convert expression from value to ECU data</text>
<rect x="679" y="215" width="276" height="21" fill="#ffffff" />
<rect x="679" y="215" width="276" height="1" fill="#8a8a8a" />
<rect x="679" y="215" width="1" height="21" fill="#8a8a8a" />
<rect x="679" y="235" width="276" height="1" fill="#8a8a8a" />
<rect x="954" y="215" width="1" height="21" fill="#8a8a8a" />
<text x="681" y="228" font-size="11" fill="#000" >[value]*0.024</text>
<text x="472" y="254" font-size="11" fill="#000" textLength="202" lengthAdjust="spacingAndGlyphs" >Convert expression from ECU data to value</text>
<rect x="679" y="239" width="276" height="21" fill="#ffffff" />
<rect x="679" y="239" width="276" height="1" fill="#8a8a8a" />
<rect x="679" y="239" width="1" height="21" fill="#8a8a8a" />
<rect x="679" y="259" width="276" height="1" fill="#8a8a8a" />
<rect x="954" y="239" width="1" height="21" fill="#8a8a8a" />
<text x="681" y="252" font-size="11" fill="#000" >[value]/0.024</text>
<path d="M962 224.5 L964.5 223.5 L967.5 227.5 L977.5 218 L978 219 L967.5 231 L966.5 231 Z" fill="#1a1a6a" shape-rendering="geometricPrecision"/>
<path d="M962 248.5 L964.5 247.5 L967.5 251.5 L977.5 242 L978 243 L967.5 255 L966.5 255 Z" fill="#1a1a6a" shape-rendering="geometricPrecision"/>
<text x="472" y="278" font-size="11" fill="#000" textLength="36" lengthAdjust="spacingAndGlyphs" >Caption</text>
<rect x="551" y="263" width="282" height="21" fill="#ffffff" />
<rect x="551" y="263" width="282" height="1" fill="#8a8a8a" />
<rect x="551" y="263" width="1" height="21" fill="#8a8a8a" />
<rect x="551" y="283" width="282" height="1" fill="#8a8a8a" />
<rect x="832" y="263" width="1" height="21" fill="#8a8a8a" />
<text x="839" y="278" font-size="11" fill="#000" textLength="29" lengthAdjust="spacingAndGlyphs" >Metric</text>
<rect x="875" y="263" width="107" height="21" fill="#ffffff" />
<rect x="875" y="263" width="107" height="1" fill="#8a8a8a" />
<rect x="875" y="263" width="1" height="21" fill="#8a8a8a" />
<rect x="875" y="283" width="107" height="1" fill="#8a8a8a" />
<rect x="981" y="263" width="1" height="21" fill="#8a8a8a" />
<text x="877" y="276" font-size="11" fill="#000" >ms</text>
<text x="472" y="302" font-size="11" fill="#000" textLength="53" lengthAdjust="spacingAndGlyphs" >Description</text>
<rect x="551" y="287" width="431" height="21" fill="#ffffff" />
<rect x="551" y="287" width="431" height="1" fill="#8a8a8a" />
<rect x="551" y="287" width="1" height="21" fill="#8a8a8a" />
<rect x="551" y="307" width="431" height="1" fill="#8a8a8a" />
<rect x="981" y="287" width="1" height="21" fill="#8a8a8a" />
<text x="473" y="327" font-size="11" fill="#ffffff" textLength="70" lengthAdjust="spacingAndGlyphs" >Axis Constants</text>
<text x="472" y="326" font-size="11" fill="#808080" textLength="70" lengthAdjust="spacingAndGlyphs" >Axis Constants</text>
<rect x="551" y="312" width="406" height="21" fill="#d4d0c8" />
<rect x="551" y="312" width="406" height="1" fill="#8a8a8a" />
<rect x="551" y="312" width="1" height="21" fill="#8a8a8a" />
<rect x="551" y="332" width="406" height="1" fill="#8a8a8a" />
<rect x="956" y="312" width="1" height="21" fill="#8a8a8a" />
<path d="M965.5 315.5 L971.5 315.5 L974.5 318.5 L974.5 327.5 L965.5 327.5 Z" stroke="#404040" fill="#ffffff" stroke-width="1"/>
<path d="M971.5 315.5 L971.5 318.5 L974.5 318.5" stroke="#404040" fill="none" stroke-width="1"/>
<rect x="967" y="318" width="3" height="1" fill="#404040" />
<rect x="967" y="321" width="7" height="1" fill="#404040" />
<rect x="967" y="323" width="7" height="1" fill="#404040" />
<circle cx="478.5" cy="345.5" r="5" fill="#d4d0c8" shape-rendering="geometricPrecision"/>
<path d="M482.5 341.5 A5.6 5.6 0 0 0 474.5 349.5" stroke="#808080" stroke-width="1" fill="none" shape-rendering="geometricPrecision"/>
<path d="M481.8 342.2 A4.6 4.6 0 0 0 475.2 348.8" stroke="#404040" stroke-width="1.4" fill="none" shape-rendering="geometricPrecision"/>
<path d="M474.5 349.5 A5.6 5.6 0 0 0 482.5 341.5" stroke="#ffffff" stroke-width="1" fill="none" shape-rendering="geometricPrecision"/>
<text x="490" y="350" font-size="11" fill="#000" textLength="44" lengthAdjust="spacingAndGlyphs" >Value Inc</text>
<text x="552" y="351" font-size="11" fill="#ffffff" textLength="60" lengthAdjust="spacingAndGlyphs" >Inc Direction</text>
<text x="551" y="350" font-size="11" fill="#808080" textLength="60" lengthAdjust="spacingAndGlyphs" >Inc Direction</text>
<rect x="619" y="336" width="90" height="21" fill="#d4d0c8" />
<rect x="619" y="336" width="90" height="1" fill="#868686" />
<rect x="619" y="336" width="1" height="21" fill="#868686" />
<rect x="619" y="356" width="90" height="1" fill="#868686" />
<rect x="708" y="336" width="1" height="21" fill="#868686" />
<clipPath id="cc619_336"><rect x="620" y="337" width="71" height="19"/></clipPath>
<text x="623" y="351" font-size="11" fill="#a0a0a0" clip-path="url(#cc619_336)">Inc data</text>
<rect x="691" y="338" width="16" height="17" fill="#d4d0c8" />
<rect x="691" y="338" width="16" height="1" fill="#868686" />
<rect x="691" y="354" width="16" height="1" fill="#868686" />
<rect x="691" y="338" width="1" height="17" fill="#868686" />
<rect x="706" y="338" width="1" height="17" fill="#868686" />
<path d="M695.0 344.5 L702.0 344.5 L698.5 348.0 Z" fill="#000" shape-rendering="geometricPrecision"/>
<text x="716" y="351" font-size="11" fill="#ffffff" textLength="47" lengthAdjust="spacingAndGlyphs" >Increment</text>
<text x="715" y="350" font-size="11" fill="#808080" textLength="47" lengthAdjust="spacingAndGlyphs" >Increment</text>
<rect x="771" y="336" width="51" height="21" fill="#d4d0c8" />
<rect x="771" y="336" width="51" height="1" fill="#8a8a8a" />
<rect x="771" y="336" width="1" height="21" fill="#8a8a8a" />
<rect x="771" y="356" width="51" height="1" fill="#8a8a8a" />
<rect x="821" y="336" width="1" height="21" fill="#8a8a8a" />
<text x="775" y="348" font-size="11" fill="#a0a0a0" >1</text>
<text x="828" y="351" font-size="11" fill="#ffffff" textLength="34" lengthAdjust="spacingAndGlyphs" >Big Inc</text>
<text x="827" y="350" font-size="11" fill="#808080" textLength="34" lengthAdjust="spacingAndGlyphs" >Big Inc</text>
<rect x="875" y="336" width="81" height="21" fill="#d4d0c8" />
<rect x="875" y="336" width="81" height="1" fill="#8a8a8a" />
<rect x="875" y="336" width="1" height="21" fill="#8a8a8a" />
<rect x="875" y="356" width="81" height="1" fill="#8a8a8a" />
<rect x="955" y="336" width="1" height="21" fill="#8a8a8a" />
<text x="879" y="348" font-size="11" fill="#a0a0a0" >5</text>
<circle cx="478.5" cy="368.5" r="5" fill="#fff" shape-rendering="geometricPrecision"/>
<path d="M482.5 364.5 A5.6 5.6 0 0 0 474.5 372.5" stroke="#808080" stroke-width="1" fill="none" shape-rendering="geometricPrecision"/>
<path d="M481.8 365.2 A4.6 4.6 0 0 0 475.2 371.8" stroke="#404040" stroke-width="1.4" fill="none" shape-rendering="geometricPrecision"/>
<path d="M474.5 372.5 A5.6 5.6 0 0 0 482.5 364.5" stroke="#ffffff" stroke-width="1" fill="none" shape-rendering="geometricPrecision"/>
<circle cx="478.5" cy="368.5" r="2" fill="#000" shape-rendering="geometricPrecision"/>
<text x="490" y="374" font-size="11" fill="#000" textLength="73" lengthAdjust="spacingAndGlyphs" >Data Increment</text>
<text x="715" y="374" font-size="11" fill="#000" textLength="47" lengthAdjust="spacingAndGlyphs" >Increment</text>
<rect x="771" y="360" width="51" height="21" fill="#ffffff" />
<rect x="771" y="360" width="51" height="1" fill="#8a8a8a" />
<rect x="771" y="360" width="1" height="21" fill="#8a8a8a" />
<rect x="771" y="380" width="51" height="1" fill="#8a8a8a" />
<rect x="821" y="360" width="1" height="21" fill="#8a8a8a" />
<text x="773" y="373" font-size="11" fill="#000" >1</text>
<text x="827" y="374" font-size="11" fill="#000" textLength="34" lengthAdjust="spacingAndGlyphs" >Big Inc</text>
<rect x="875" y="360" width="81" height="21" fill="#ffffff" />
<rect x="875" y="360" width="81" height="1" fill="#8a8a8a" />
<rect x="875" y="360" width="1" height="21" fill="#8a8a8a" />
<rect x="875" y="380" width="81" height="1" fill="#8a8a8a" />
<rect x="955" y="360" width="1" height="21" fill="#8a8a8a" />
<text x="877" y="373" font-size="11" fill="#000" >1</text>
<text x="472" y="400" font-size="11" fill="#000" textLength="68" lengthAdjust="spacingAndGlyphs" >Color Direction</text>
<rect x="551" y="385" width="90" height="21" fill="#ffffff" />
<rect x="551" y="385" width="90" height="1" fill="#868686" />
<rect x="551" y="385" width="1" height="21" fill="#868686" />
<rect x="551" y="405" width="90" height="1" fill="#868686" />
<rect x="640" y="385" width="1" height="21" fill="#868686" />
<clipPath id="cc551_385"><rect x="552" y="386" width="71" height="19"/></clipPath>
<text x="554" y="400" font-size="11" fill="#000" clip-path="url(#cc551_385)">Green to Red</text>
<rect x="623" y="387" width="16" height="17" fill="#d4d0c8" />
<rect x="623" y="387" width="16" height="1" fill="#868686" />
<rect x="623" y="403" width="16" height="1" fill="#868686" />
<rect x="623" y="387" width="1" height="17" fill="#868686" />
<rect x="638" y="387" width="1" height="17" fill="#868686" />
<path d="M627.0 393.5 L634.0 393.5 L630.5 397.0 Z" fill="#000" shape-rendering="geometricPrecision"/>
<text x="652" y="401" font-size="11" fill="#ffffff" textLength="36" lengthAdjust="spacingAndGlyphs" >1D Cols</text>
<text x="651" y="400" font-size="11" fill="#808080" textLength="36" lengthAdjust="spacingAndGlyphs" >1D Cols</text>
<rect x="703" y="385" width="50" height="21" fill="#ffffff" />
<rect x="703" y="385" width="50" height="1" fill="#8a8a8a" />
<rect x="703" y="385" width="1" height="21" fill="#8a8a8a" />
<rect x="703" y="405" width="50" height="1" fill="#8a8a8a" />
<rect x="752" y="385" width="1" height="21" fill="#8a8a8a" />
<text x="705" y="398" font-size="11" fill="#a0a0a0" >1</text>
<text x="760" y="400" font-size="11" fill="#000" textLength="49" lengthAdjust="spacingAndGlyphs" >Data View</text>
<rect x="815" y="385" width="81" height="21" fill="#ffffff" />
<rect x="815" y="385" width="81" height="1" fill="#868686" />
<rect x="815" y="385" width="1" height="21" fill="#868686" />
<rect x="815" y="405" width="81" height="1" fill="#868686" />
<rect x="895" y="385" width="1" height="21" fill="#868686" />
<clipPath id="cc815_385"><rect x="816" y="386" width="62" height="19"/></clipPath>
<text x="819" y="400" font-size="11" fill="#000" clip-path="url(#cc815_385)">Numeric</text>
<rect x="878" y="387" width="16" height="17" fill="#d4d0c8" />
<rect x="878" y="387" width="16" height="1" fill="#868686" />
<rect x="878" y="403" width="16" height="1" fill="#868686" />
<rect x="878" y="387" width="1" height="17" fill="#868686" />
<rect x="893" y="387" width="1" height="17" fill="#868686" />
<path d="M882.0 393.5 L889.0 393.5 L885.5 397.0 Z" fill="#000" shape-rendering="geometricPrecision"/>
<text x="472" y="427" font-size="11" fill="#000" textLength="40" lengthAdjust="spacingAndGlyphs" >Min Data</text>
<rect x="551" y="414" width="106" height="20" fill="#ffffff" />
<rect x="551" y="414" width="106" height="1" fill="#8a8a8a" />
<rect x="551" y="414" width="1" height="20" fill="#8a8a8a" />
<rect x="551" y="433" width="106" height="1" fill="#8a8a8a" />
<rect x="656" y="414" width="1" height="20" fill="#8a8a8a" />
<text x="553" y="427" font-size="11" fill="#000" >0</text>
<text x="664" y="427" font-size="11" fill="#000" textLength="46" lengthAdjust="spacingAndGlyphs" >Max Data</text>
<rect x="715" y="414" width="106" height="20" fill="#ffffff" />
<rect x="715" y="414" width="106" height="1" fill="#8a8a8a" />
<rect x="715" y="414" width="1" height="20" fill="#8a8a8a" />
<rect x="715" y="433" width="106" height="1" fill="#8a8a8a" />
<rect x="820" y="414" width="1" height="20" fill="#8a8a8a" />
<text x="717" y="427" font-size="11" fill="#000" >4</text>
<rect x="467" y="444" width="520" height="16" fill="#808080" />
<text x="472" y="455.5" font-size="11" fill="#ffffff" font-weight="bold" textLength="25" lengthAdjust="spacingAndGlyphs" >Help</text>
<rect x="468" y="464" width="518" height="89" fill="#ffffff" />
<rect x="468" y="464" width="518" height="1" fill="#808080" />
<rect x="468" y="464" width="1" height="89" fill="#808080" />
<rect x="468" y="552" width="518" height="1" fill="#ffffff" />
<rect x="985" y="464" width="1" height="89" fill="#ffffff" />
<rect x="469" y="465" width="516" height="1" fill="#404040" />
<rect x="469" y="465" width="1" height="87" fill="#404040" />
<rect x="469" y="551" width="516" height="1" fill="#d4d0c8" />
<rect x="984" y="465" width="1" height="87" fill="#d4d0c8" />
<defs><pattern id="dith" width="2" height="2" patternUnits="userSpaceOnUse"><rect width="2" height="2" fill="#ffffff"/><rect width="1" height="1" fill="#d4d0c8"/><rect x="1" y="1" width="1" height="1" fill="#d4d0c8"/></pattern></defs>
<rect x="969" y="466" width="16" height="85" fill="url(#dith)" />
<rect x="969" y="466" width="16" height="16" fill="#d4d0c8" />
<rect x="969" y="466" width="16" height="1" fill="#ffffff" />
<rect x="969" y="466" width="1" height="16" fill="#ffffff" />
<rect x="969" y="481" width="16" height="1" fill="#404040" />
<rect x="984" y="466" width="1" height="16" fill="#404040" />
<rect x="970" y="467" width="14" height="1" fill="#d4d0c8" />
<rect x="970" y="467" width="1" height="14" fill="#d4d0c8" />
<rect x="970" y="480" width="14" height="1" fill="#808080" />
<rect x="983" y="467" width="1" height="14" fill="#808080" />
<rect x="969" y="466" width="15" height="1" fill="#ffffff" />
<rect x="969" y="466" width="1" height="15" fill="#ffffff" />
<rect x="969" y="535" width="16" height="16" fill="#d4d0c8" />
<rect x="969" y="535" width="16" height="1" fill="#ffffff" />
<rect x="969" y="535" width="1" height="16" fill="#ffffff" />
<rect x="969" y="550" width="16" height="1" fill="#404040" />
<rect x="984" y="535" width="1" height="16" fill="#404040" />
<rect x="970" y="536" width="14" height="1" fill="#d4d0c8" />
<rect x="970" y="536" width="1" height="14" fill="#d4d0c8" />
<rect x="970" y="549" width="14" height="1" fill="#808080" />
<rect x="983" y="536" width="1" height="14" fill="#808080" />
<rect x="969" y="535" width="15" height="1" fill="#ffffff" />
<rect x="969" y="535" width="1" height="15" fill="#ffffff" />
<path d="M973 477 L977 473 L981 477 Z" fill="#a0a0a0"/>
<path d="M973 540 L977 544 L981 540 Z" fill="#a0a0a0"/>
<rect x="461" y="566" width="75" height="25" fill="#000" />
<rect x="462" y="567" width="73" height="23" fill="#d4d0c8" />
<rect x="462" y="589" width="73" height="1" fill="#404040" />
<rect x="534" y="567" width="1" height="23" fill="#404040" />
<rect x="462" y="567" width="72" height="1" fill="#ffffff" />
<rect x="462" y="567" width="1" height="22" fill="#ffffff" />
<rect x="463" y="588" width="71" height="1" fill="#808080" />
<rect x="533" y="568" width="1" height="21" fill="#808080" />
<text x="487" y="582" font-size="11" fill="#000" textLength="24" lengthAdjust="spacingAndGlyphs" >Save</text>
<rect x="487" y="584" width="7" height="1" fill="#000" />
<rect x="541" y="566" width="75" height="25" fill="#d4d0c8" />
<rect x="541" y="590" width="75" height="1" fill="#404040" />
<rect x="615" y="566" width="1" height="25" fill="#404040" />
<rect x="541" y="566" width="74" height="1" fill="#ffffff" />
<rect x="541" y="566" width="1" height="24" fill="#ffffff" />
<rect x="542" y="589" width="73" height="1" fill="#808080" />
<rect x="614" y="567" width="1" height="23" fill="#808080" />
<text x="562" y="582" font-size="11" fill="#000" textLength="34" lengthAdjust="spacingAndGlyphs" >Cancel</text>
<rect x="562" y="584" width="7" height="1" fill="#000" />
<rect x="621" y="566" width="115" height="25" fill="#d4d0c8" />
<rect x="621" y="590" width="115" height="1" fill="#404040" />
<rect x="735" y="566" width="1" height="25" fill="#404040" />
<rect x="621" y="566" width="114" height="1" fill="#ffffff" />
<rect x="621" y="566" width="1" height="24" fill="#ffffff" />
<rect x="622" y="589" width="113" height="1" fill="#808080" />
<rect x="734" y="567" width="1" height="23" fill="#808080" />
<text x="629" y="583" font-size="11" fill="#ffffff" textLength="101" lengthAdjust="spacingAndGlyphs" >Swap Rows and Cols</text>
<text x="628" y="582" font-size="11" fill="#a0a0a0" textLength="101" lengthAdjust="spacingAndGlyphs" >Swap Rows and Cols</text>
<rect x="645" y="584" width="8" height="1" fill="#a0a0a0" />
<rect x="741" y="566" width="89" height="25" fill="#d4d0c8" />
<rect x="741" y="590" width="89" height="1" fill="#404040" />
<rect x="829" y="566" width="1" height="25" fill="#404040" />
<rect x="741" y="566" width="88" height="1" fill="#ffffff" />
<rect x="741" y="566" width="1" height="24" fill="#ffffff" />
<rect x="742" y="589" width="87" height="1" fill="#808080" />
<rect x="828" y="567" width="1" height="23" fill="#808080" />
<text x="750" y="582" font-size="11" fill="#000" textLength="70" lengthAdjust="spacingAndGlyphs" >Calc map desc</text>
<rect x="775" y="584" width="12" height="1" fill="#000" />
<rect x="878" y="566" width="115" height="25" fill="#d4d0c8" />
<rect x="878" y="590" width="115" height="1" fill="#404040" />
<rect x="992" y="566" width="1" height="25" fill="#404040" />
<rect x="878" y="566" width="114" height="1" fill="#ffffff" />
<rect x="878" y="566" width="1" height="24" fill="#ffffff" />
<rect x="879" y="589" width="113" height="1" fill="#808080" />
<rect x="991" y="567" width="1" height="23" fill="#808080" />
<text x="892" y="582" font-size="11" fill="#000" textLength="84" lengthAdjust="spacingAndGlyphs" >Reset from Parent</text>
<rect x="892" y="584" width="7" height="1" fill="#000" />
</svg></body></html>
